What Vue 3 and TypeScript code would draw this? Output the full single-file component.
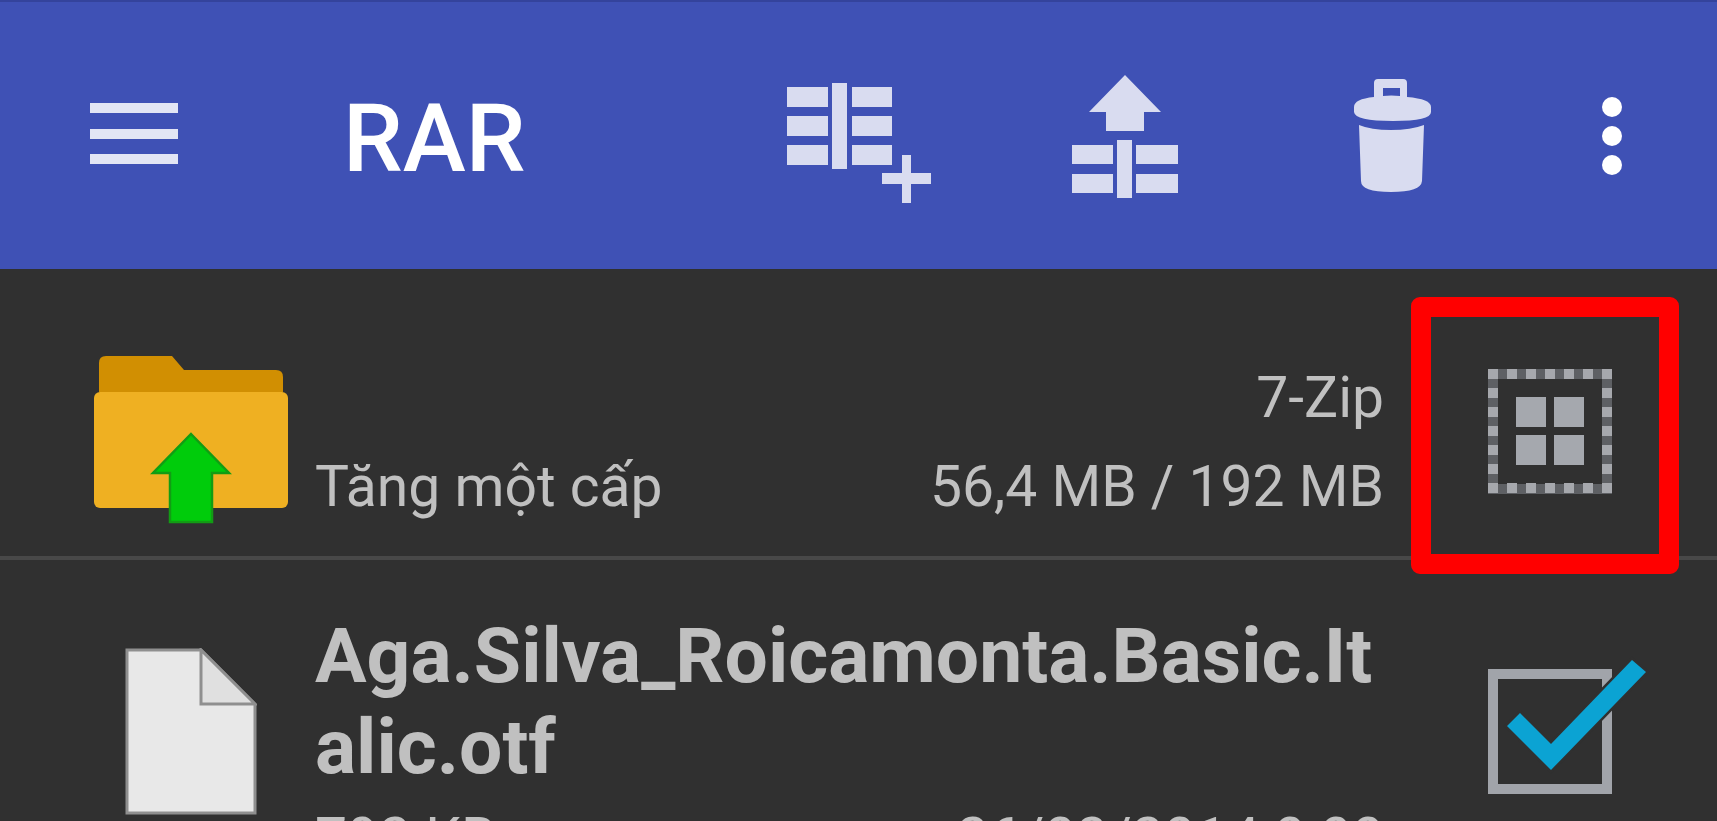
<script setup lang="ts">
const edgeDots = Array.from({ length: 7 }, (_, i) => i * 19)
</script>

<template>
  <div class="screen">
    <header class="toolbar">
      <svg class="menu" width="88" height="62" viewBox="0 0 88 62" aria-label="Menu">
        <rect y="0" width="88" height="10" />
        <rect y="26" width="88" height="10" />
        <rect y="51" width="88" height="10" />
      </svg>
      <h1 class="title">RAR</h1>
      <div class="actions">
        <svg class="ic-add" width="146" height="122" viewBox="787 82 146 122">
          <path d="M787 87h41v20h-41zM787 116h41v20h-41zM787 145h41v20h-41zM852 87h40v20h-40zM852 116h40v20h-40zM852 145h40v20h-40zM832 83h15v86h-15zM902 155h9v18h20v11h-20v19h-9v-19h-20v-11h20z" />
        </svg>
        <svg class="ic-up" width="108" height="124" viewBox="1072 75 108 124">
          <path d="M1126 75l36 37h-17v19h-38v-19h-17zM1073 145h41v19h-41zM1073 174h41v19h-41zM1137 145h42v19h-42zM1137 174h42v19h-42zM1118 140h15v58h-15z" />
        </svg>
        <svg class="ic-trash" width="78" height="114" viewBox="1355 79 78 114">
          <path fill-rule="evenodd" d="M1375 97v-14q0-4 4-4h25q4 0 4 4v14q24 2 24 10v5q0 9-38 9t-39-9v-5q0-8 20-10zM1384 88v8q8-1 17 0v-8z" />
          <path d="M1360 125q12 5 32 5t33-5l-2 56q-1 11-31 11t-30-11z" />
        </svg>
        <svg class="ic-more" width="20" height="78" viewBox="0 0 20 78">
          <circle cx="10" cy="10" r="10" />
          <circle cx="10" cy="39" r="10" />
          <circle cx="10" cy="68" r="10" />
        </svg>
      </div>
    </header>

    <section class="row row-up">
      <svg class="folder" width="196" height="168" viewBox="94 356 196 168">
        <path fill="#d18f02" d="M99 392v-29q0-7 7-7h66l12 14h92q7 0 7 7v15z" />
        <rect x="94" y="392" width="194" height="116" rx="6" fill="#efb022" />
        <path fill="#00cc0b" stroke="#129c14" stroke-width="2.5" d="M191 434l38 39h-17v49h-42v-49h-17z" />
      </svg>
      <div class="row-text up-text">
        <div class="line line-end">7-Zip</div>
        <div class="line line-split">
          <span>Tăng một cấp</span>
          <span>56,4 MB / 192 MB</span>
        </div>
      </div>
      <div class="select-slot">
        <div class="select-all">
          <i v-for="d in edgeDots" :key="'t' + d" class="dot" :style="{ left: d + 'px', top: '0px' }"></i>
          <i v-for="d in edgeDots" :key="'b' + d" class="dot" :style="{ left: d + 'px', top: '114px' }"></i>
          <i v-for="d in edgeDots" :key="'l' + d" class="dot" :style="{ left: '0px', top: d + 'px' }"></i>
          <i v-for="d in edgeDots" :key="'r' + d" class="dot" :style="{ left: '114px', top: d + 'px' }"></i>
          <div class="tiles"><b></b><b></b><b></b><b></b></div>
        </div>
      </div>
    </section>

    <section class="row row-file">
      <svg class="file" width="132" height="168" viewBox="124 648 132 168">
        <path fill="#e8e8e8" stroke="#8f8f8f" stroke-width="3" d="M126 650h74l54 54v109h-128z" />
        <path fill="#e0e0e0" stroke="#8f8f8f" stroke-width="3" d="M200 650v54h54z" />
      </svg>
      <div class="row-text file-text">
        <div class="name">Aga.Silva_Roicamonta.Basic.Italic.otf</div>
        <div class="line line-split meta">
          <span>792 KB</span>
          <span>26/03/2014 0:00</span>
        </div>
      </div>
      <div class="select-slot">
        <svg class="check" width="160" height="136" viewBox="1487 660 160 136">
          <path fill="none" stroke="#a1a4aa" stroke-width="10" d="M1493 674h114v115h-114z" />
          <path fill="#0ba3d3" stroke="#303030" stroke-width="5" paint-order="stroke" d="M1520 713l-13 13 44 44 95-98-14-12-81 84z" />
        </svg>
      </div>
    </section>

    <div class="callout"></div>
  </div>
</template>

<style>
html, body { margin: 0; background: #303030; }
</style>

<style scoped>
.screen {
  position: relative;
  width: 1717px;
  height: 821px;
  overflow: hidden;
  background: #303030;
  font-family: Roboto, "Noto Sans", sans-serif;
}
.toolbar {
  box-sizing: border-box;
  height: 269px;
  display: flex;
  align-items: flex-start;
  padding: 2px 95px 0 90px;
  background: #3f51b5;
  border-top: 2px solid #34439c;
}
.menu { fill: #e2e5f4; margin-top: 99px; flex: none; }
.title {
  margin: 87px 0 0 165px;
  color: #fff;
  font-size: 95px;
  font-weight: 500;
  line-height: 1;
}
.actions {
  margin-left: auto;
  display: flex;
  align-items: flex-start;
}
.actions svg { fill: #d9dcf0; display: block; }
.ic-add { margin: 78px 138px 0 0; }
.ic-up { margin: 71px 175px 0 0; }
.ic-trash { margin: 75px 170px 0 0; }
.actions .ic-more { fill: #fff; margin-top: 93px; }
.row {
  display: flex;
  align-items: flex-start;
  box-sizing: border-box;
  color: #c0c0c0;
}
.row-up {
  height: 291px;
  border-bottom: 4px solid #484848;
}
.folder { margin: 87px 0 0 94px; flex: none; }
.row-text { margin-left: 25px; width: 1069px; flex: none; }
.up-text { margin-top: 84px; }
.line {
  font-size: 57px;
  line-height: 89px;
}
.line-end { text-align: right; }
.line-split { display: flex; justify-content: space-between; }
.select-slot {
  margin: 100px 0 0 104px;
  flex: none;
}
.select-all {
  position: relative;
  width: 124px;
  height: 125px;
  background: #5e6064;
}
.select-all::before {
  content: "";
  position: absolute;
  inset: 10px;
  background: #303030;
}
.dot {
  position: absolute;
  width: 10px;
  height: 10px;
  background: #a6a8ad;
}
.tiles {
  position: absolute;
  left: 28px;
  top: 28px;
  display: grid;
  grid-template-columns: 30px 30px;
  grid-auto-rows: 30px;
  gap: 8px;
}
.tiles b { background: #a5a8ae; }
.file { margin: 88px 0 0 125px; flex: none; }
.file-text { margin-left: 58px; margin-top: 51px; }
.name {
  font-size: 76.8px;
  font-weight: 700;
  line-height: 91px;
  overflow-wrap: anywhere;
}
.meta { margin-top: 1px; }
.callout {
  position: absolute;
  left: 1411px;
  top: 297px;
  width: 268px;
  height: 277px;
  box-sizing: border-box;
  border: 20px solid #ff0000;
  border-radius: 9px;
}
.check { display: block; margin-left: -1px; overflow: visible; }
</style>
